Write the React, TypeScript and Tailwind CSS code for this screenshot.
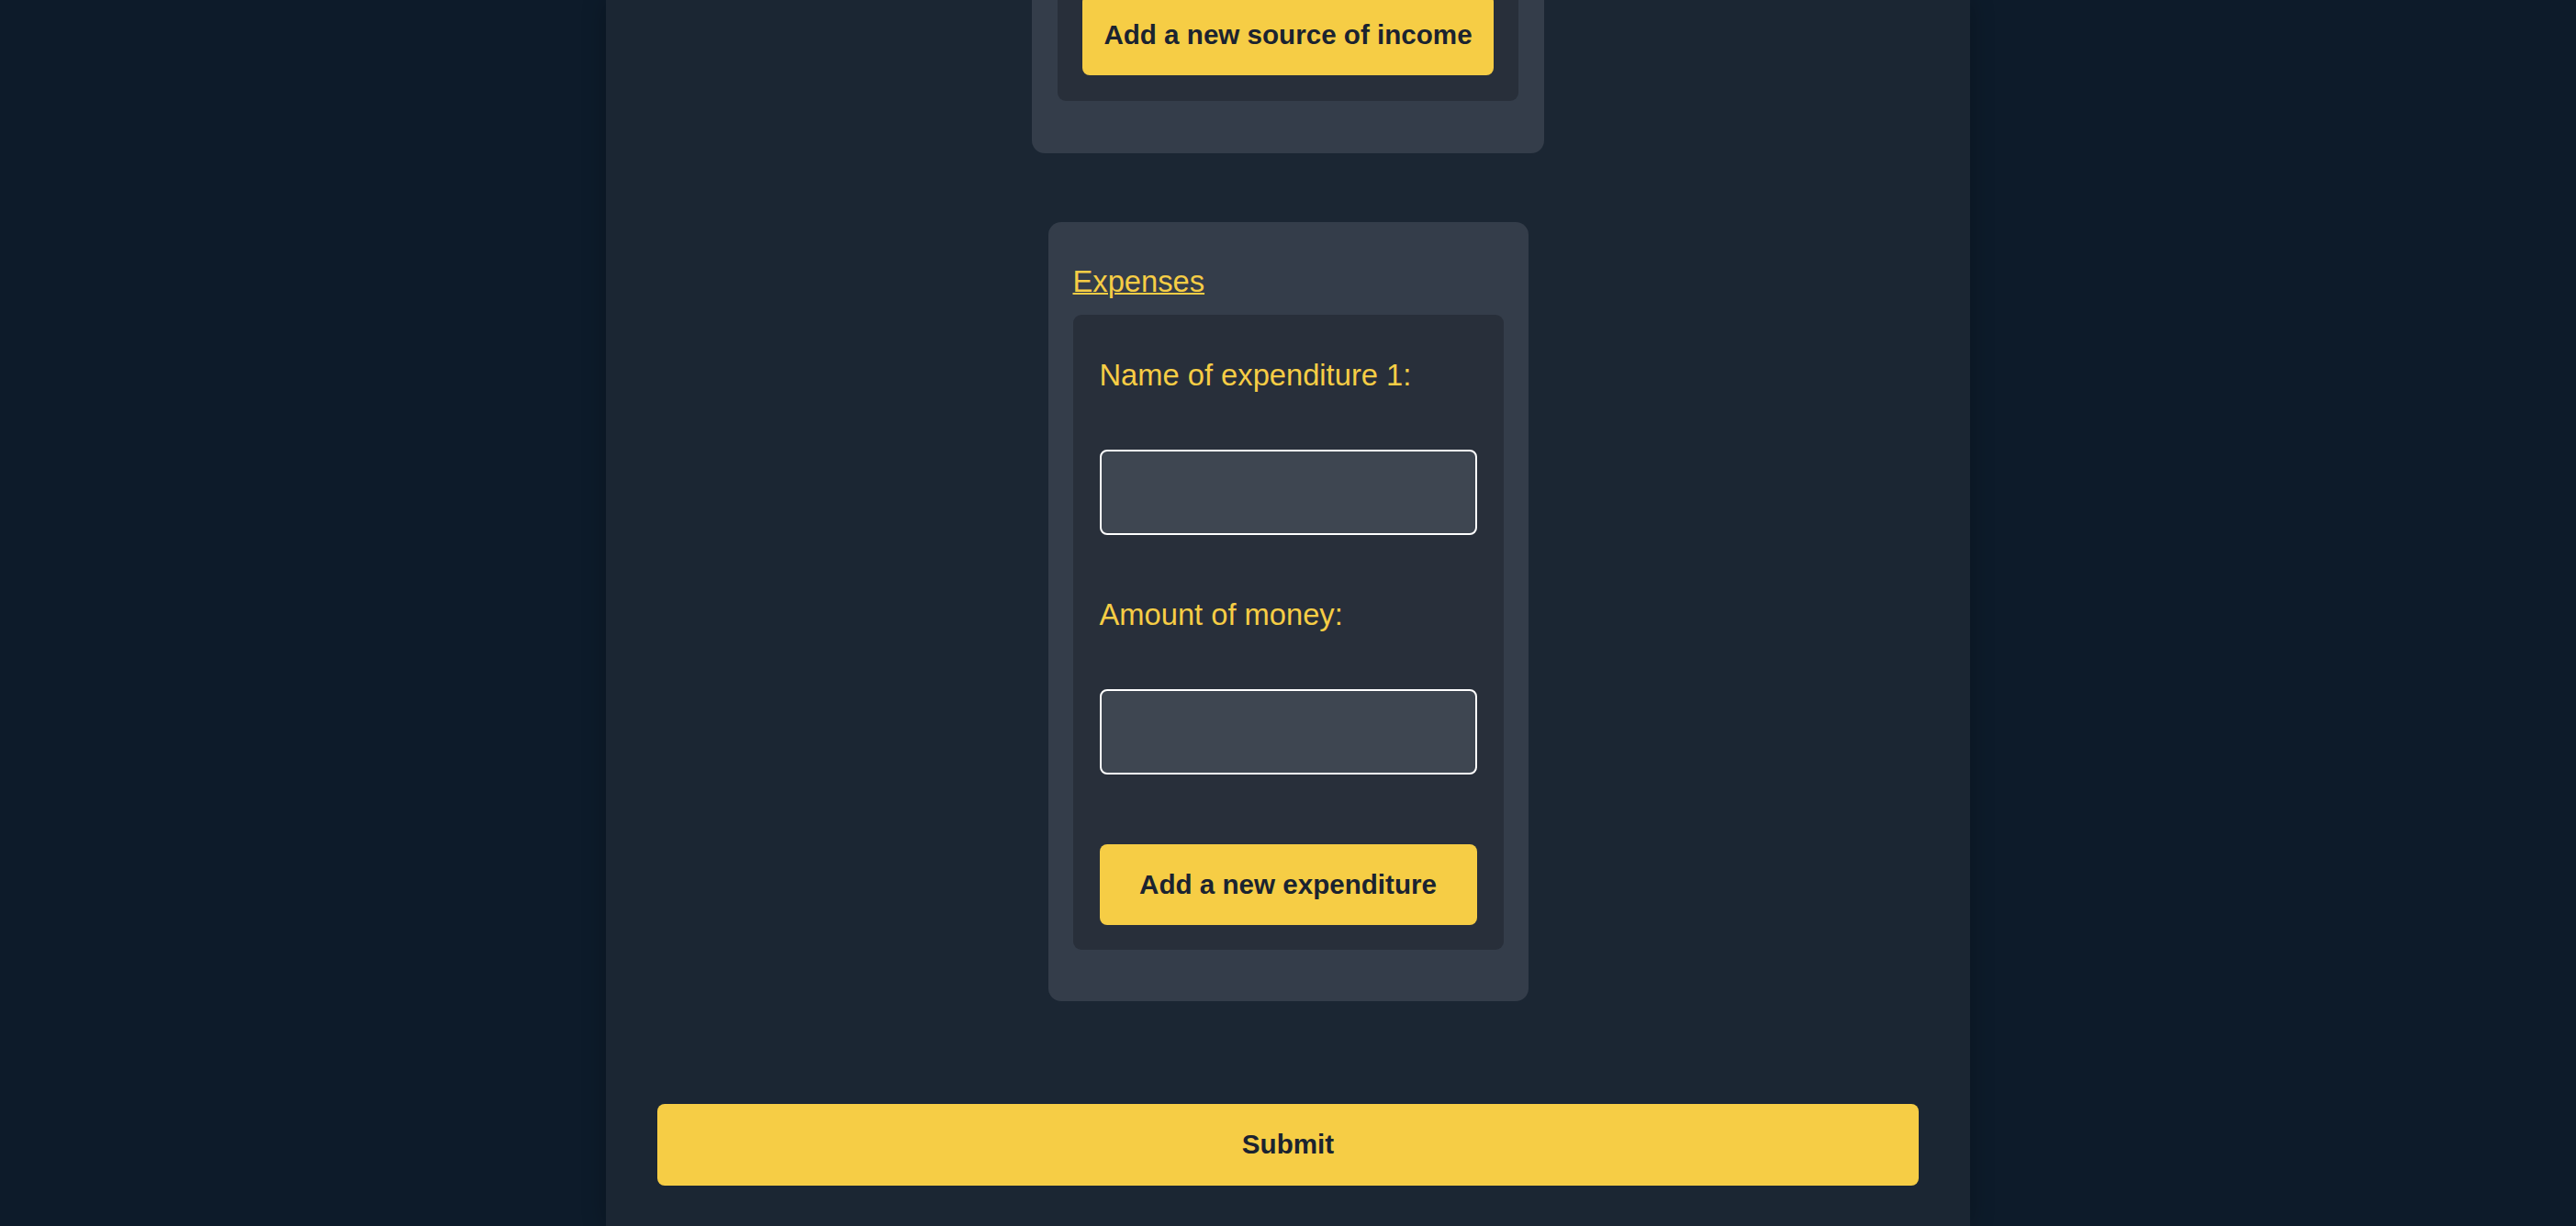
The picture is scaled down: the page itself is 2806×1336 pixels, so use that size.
import React from "react";

const font = { fontFamily: '"Liberation Sans", Arial, sans-serif' };

const YellowButton = ({ label, className }: { label: string; className: string }) => (
  <button
    type="button"
    className={`flex items-center justify-center rounded-[8px] bg-[#f6cd45] text-[29.6px] font-bold text-[#1b2330] ${className}`}
  >
    {label}
  </button>
);

const Field = ({ label, first }: { label: string; first?: boolean }) => (
  <>
    <label className={`block text-[32.7px] leading-[38px] text-[#f6cd45] ${first ? "mt-[19px]" : "mt-[68px]"}`}>
      {label}
    </label>
    <input
      type="text"
      className="mt-[62px] block h-[93px] w-full rounded-[8px] border-2 border-white bg-[#3e4651] px-3 text-[28px] text-white outline-none"
    />
  </>
);

const App: React.FC = () => {
  return (
    <div className="flex h-[1336px] w-full justify-center overflow-hidden bg-[#0d1b2a]" style={font}>
      <main className="flex w-[1486px] flex-col items-center bg-[#1b2633] px-[56px] shadow-[0_0_24px_rgba(0,0,0,0.25)]">
        {/* income card, scrolled partly out of view */}
        <section className="-mt-[6px] w-[558px] rounded-b-[14px] bg-[#343d4a] px-[28px] pb-[57px]">
          <div className="rounded-b-[9px] bg-[#282f3a] px-[27px] pb-[28px]">
            <YellowButton label="Add a new source of income" className="h-[88px] w-full" />
          </div>
        </section>

        <section className="mt-[75px] w-[523px] rounded-[14px] bg-[#343d4a] px-[27px] pb-[56px] pt-[46px]">
          <h3 className="text-[32.7px] font-normal leading-[38px] text-[#f6cd45] underline decoration-2">Expenses</h3>
          <div className="mt-[17px] rounded-[9px] bg-[#282f3a] px-[29px] pb-[27px] pt-[28px]">
            <Field label="Name of expenditure 1:" first />
            <Field label="Amount of money:" />
            <YellowButton label="Add a new expenditure" className="mt-[76px] h-[88px] w-full" />
          </div>
        </section>

        <YellowButton label="Submit" className="mt-[112px] h-[89px] w-full shrink-0" />
      </main>
    </div>
  );
};

export default App;
